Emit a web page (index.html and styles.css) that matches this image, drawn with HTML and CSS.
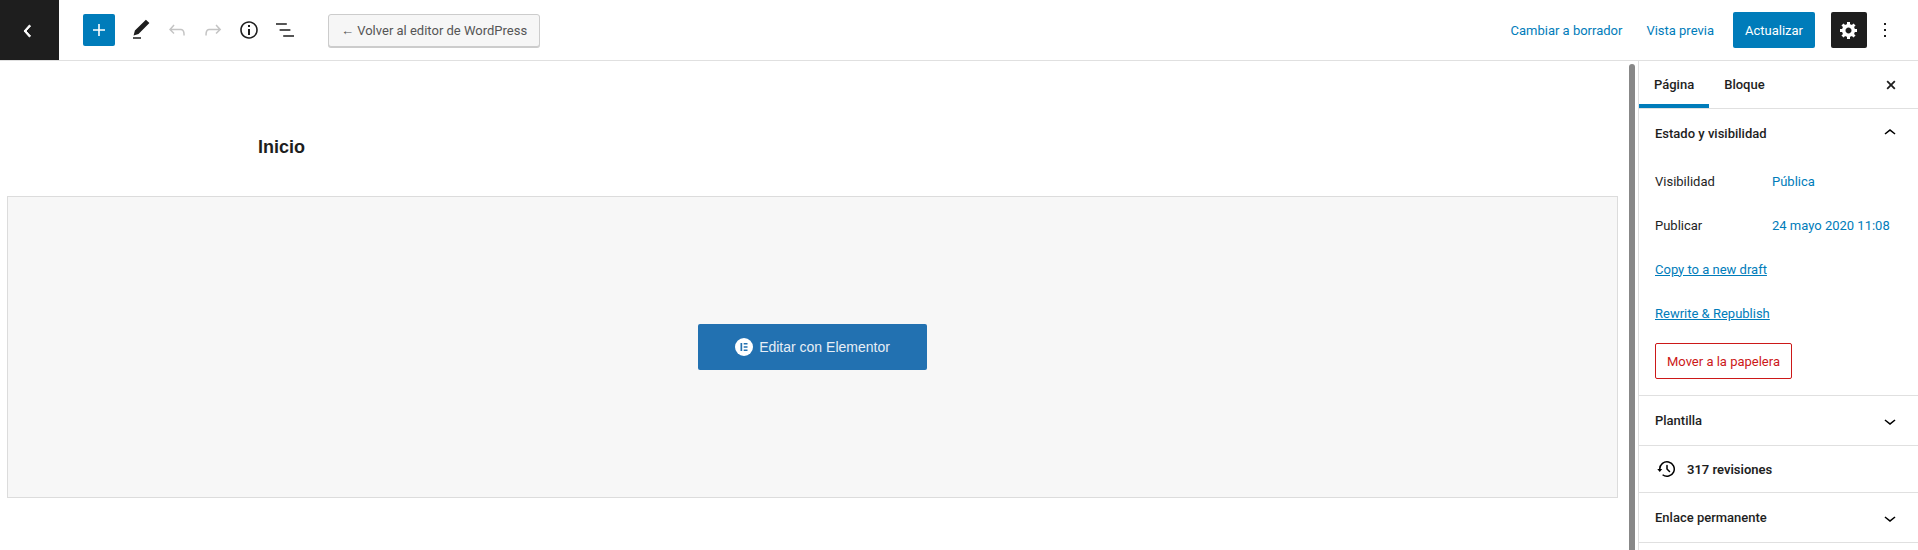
FILE: index.html
```html
<!DOCTYPE html>
<html lang="es">
<head>
    <meta charset="UTF-8">
    <title>Editar página</title>
    <link rel="stylesheet" href="styles.css">
</head>
<body>
    <header class="topbar">
        <a class="back-btn" href="#">
            <svg width="24" height="24" viewBox="0 0 24 24"><path d="M14.6 7l-1.2-1L8 12l5.4 6 1.2-1-4.6-5z" fill="#fff" stroke="#fff" stroke-width="1"/></svg>
        </a>
        <div class="tools">
            <button class="add-btn">
                <svg width="24" height="24" viewBox="0 0 24 24"><path d="M18 11.2h-5.2V6h-1.6v5.2H6v1.6h5.2V18h1.6v-5.2H18z"/></svg>
            </button>
            <button class="tool">
                <svg width="24" height="24" viewBox="0 0 24 24"><path d="M20.4 5.1L16.9 1.7 5.9 12.6l-1.3 4.8 4.9-1.3L20.4 5.1zM4 20.8h8v-1.5H4v1.5z"/></svg>
            </button>
            <button class="tool disabled">
                <svg width="24" height="24" viewBox="0 0 24 24"><path d="M18.3 11.7c-.6-.6-1.4-.9-2.3-.9H6.7l2.9-3.3-1.1-1-4.5 5L8.5 16l1-1-2.7-2.7H16c.5 0 .9.2 1.3.5 1 1 1 3.4 1 4.5v.3h1.5v-.2c0-1.5 0-4.3-1.5-5.7z"/></svg>
            </button>
            <button class="tool disabled">
                <svg width="24" height="24" viewBox="0 0 24 24"><path d="M15.6 6.5l-1.1 1 2.9 3.3H8c-.9 0-1.7.3-2.3.9-1.4 1.5-1.4 4.2-1.4 5.6v.2h1.5v-.3c0-1.1 0-3.5 1-4.5.3-.3.7-.5 1.3-.5h9.2L14.5 15l1.1 1.1 4.6-4.6-4.6-5z"/></svg>
            </button>
            <button class="tool">
                <svg width="24" height="24" viewBox="0 0 24 24"><path d="M12 3.2c-4.8 0-8.8 3.9-8.8 8.8 0 4.8 3.9 8.8 8.8 8.8 4.8 0 8.8-3.9 8.8-8.8 0-4.8-4-8.8-8.8-8.8zm0 16c-4 0-7.2-3.3-7.2-7.2C4.8 8 8 4.8 12 4.8s7.2 3.3 7.2 7.2c0 4-3.2 7.2-7.2 7.2zM11 17h2v-6h-2v6zm0-8h2V7h-2v2z"/></svg>
            </button>
            <button class="tool">
                <svg width="24" height="24" viewBox="0 0 24 24"><path d="M13.8 5.2H3v1.5h10.8V5.2zm-3.6 12v1.5H21v-1.5H10.2zm7.2-6H6.6v1.5h10.8v-1.5z"/></svg>
            </button>
            <a class="return-btn" href="#">← Volver al editor de WordPress</a>
        </div>
        <div class="settings">
            <a class="link" href="#">Cambiar a borrador</a>
            <a class="link" href="#">Vista previa</a>
            <button class="update-btn">Actualizar</button>
            <button class="gear-btn">
                <svg width="20" height="20" viewBox="0 0 20 20"><path d="M18 12h-2.18c-.17.7-.44 1.35-.81 1.93l1.54 1.54-2.1 2.1-1.54-1.54c-.58.36-1.23.63-1.91.79V19H8v-2.18c-.68-.16-1.33-.43-1.91-.79l-1.54 1.54-2.12-2.12 1.54-1.54c-.36-.58-.63-1.23-.79-1.91H1V9.03h2.17c.16-.7.44-1.35.8-1.94L2.43 5.55l2.1-2.1 1.54 1.54c.58-.37 1.24-.64 1.93-.81V2h3v2.18c.68.16 1.33.43 1.91.79l1.54-1.54 2.12 2.12-1.54 1.54c.36.59.64 1.24.8 1.94H18V12zm-8.5 1.5c1.66 0 3-1.34 3-3s-1.34-3-3-3-3 1.34-3 3 1.34 3 3 3z"/></svg>
            </button>
            <button class="more-btn">
                <svg width="24" height="24" viewBox="0 0 24 24"><path d="M13 19h-2v-2h2v2zm0-6h-2v-2h2v2zm0-6h-2V5h2v2z"/></svg>
            </button>
        </div>
    </header>

    <div class="workspace">
        <main class="content">
            <h1 class="page-title">Inicio</h1>
            <div class="placeholder">
                <a class="elementor-btn" href="#">
                    <svg width="18" height="18" viewBox="0 0 18 18"><circle cx="9" cy="9" r="9" fill="#fff"/><path d="M5.5 5h1.7v8H5.5zM8.7 5h3.8v1.5H8.7zM8.7 8.2h3.8v1.6H8.7zM8.7 11.5h3.8V13H8.7z" fill="#2271b1"/></svg>
                    Editar con Elementor
                </a>
            </div>
        </main>
        <div class="scrollbar"><div class="scroll-thumb"></div></div>

        <aside class="sidebar">
            <div class="tabs">
                <span class="tab active">Página</span>
                <span class="tab">Bloque</span>
                <button class="close-btn">
                    <svg width="18" height="18" viewBox="0 0 20 20"><path d="M14.95 6.46L11.41 10l3.54 3.54-1.41 1.41L10 11.42l-3.54 3.53-1.41-1.41L8.59 10 5.05 6.46l1.41-1.41L10 8.59l3.54-3.54z"/></svg>
                </button>
            </div>

            <section class="panel panel-open">
                <div class="panel-head">
                    <span>Estado y visibilidad</span>
                    <svg width="24" height="24" viewBox="0 0 24 24"><path d="M6.5 12.4L12 8l5.5 4.4-.9 1.2L12 10l-4.5 3.6-1-1.2z"/></svg>
                </div>
                <div class="row"><span class="row-label">Visibilidad</span><a class="link" href="#">Pública</a></div>
                <div class="row"><span class="row-label">Publicar</span><a class="link" href="#">24 mayo 2020 11:08</a></div>
                <div class="row"><a class="link underlined" href="#">Copy to a new draft</a></div>
                <div class="row"><a class="link underlined" href="#">Rewrite &amp; Republish</a></div>
                <button class="trash-btn">Mover a la papelera</button>
            </section>

            <section class="panel panel-closed">
                <span>Plantilla</span>
                <svg width="24" height="24" viewBox="0 0 24 24"><path d="M17.5 11.6L12 16l-5.5-4.4.9-1.2L12 14l4.5-3.6 1 1.2z"/></svg>
            </section>
            <section class="panel revisions">
                <svg width="24" height="24" viewBox="0 0 24 24"><path d="M5.5 12h1.75l-2.5 3-2.5-3H4a8 8 0 113.134 6.35l.907-1.194A6.5 6.5 0 105.5 12zm9.53 1.97l-2.28-2.28V8.5a.75.75 0 00-1.5 0V12a.747.747 0 00.218.529l1.282-.84-1.28.842 2.5 2.5a.75.75 0 101.06-1.061z"/></svg>
                <span>317 revisiones</span>
            </section>
            <section class="panel panel-closed">
                <span>Enlace permanente</span>
                <svg width="24" height="24" viewBox="0 0 24 24"><path d="M17.5 11.6L12 16l-5.5-4.4.9-1.2L12 14l4.5-3.6 1 1.2z"/></svg>
            </section>
        </aside>
    </div>
</body>
</html>
```

FILE: styles.css
```css
html, body {
    margin: 0;
    padding: 0;
    height: 550px;
    overflow: hidden;
    background-color: #fff;
    color: #1e1e1e;
    font-family: 'Roboto', sans-serif;
    font-size: 13px;
}
button {
    border: none;
    background: none;
    padding: 0;
    font: inherit;
    display: flex;
    align-items: center;
    justify-content: center;
}
a {
    text-decoration: none;
}
svg {
    display: block;
}
.link {
    color: #007cba;
}
.underlined {
    text-decoration: underline;
}

/* top bar */
.topbar {
    display: flex;
    align-items: center;
    height: 60px;
    border-bottom: 1px solid #e0e0e0;
}
.back-btn {
    width: 59px;
    height: 60px;
    box-sizing: border-box;
    padding: 1px 3px 0 0;
    background-color: #1e1e1e;
    display: flex;
    align-items: center;
    justify-content: center;
}
.tools {
    display: flex;
    align-items: center;
    margin-left: 24px;
}
.add-btn {
    width: 32px;
    height: 32px;
    background-color: #007cba;
    border-radius: 2px;
    fill: #fff;
    margin-right: 8px;
}
.tool {
    width: 36px;
    height: 36px;
    fill: #1e1e1e;
}
.tool.disabled {
    fill: #c4c4c4;
}
.return-btn {
    margin-left: 25px;
    height: 31px;
    line-height: 31px;
    padding: 0 12px;
    border: 1px solid #ccc;
    border-radius: 3px;
    background-color: #f6f6f6;
    color: #555;
    box-shadow: 0 1px 0 #ccc;
}
.settings {
    display: flex;
    align-items: center;
    margin-left: auto;
}
.settings .link {
    margin-right: 24px;
}
.settings .link + .update-btn {
    margin-left: -5px;
}
.update-btn {
    width: 82px;
    height: 36px;
    background-color: #007cba;
    color: #fff;
    border-radius: 2px;
    margin-right: 16px;
}
.gear-btn {
    width: 36px;
    height: 36px;
    background-color: #1e1e1e;
    border-radius: 2px;
    fill: #fff;
}
.more-btn {
    width: 24px;
    height: 36px;
    margin: 0 21px 0 6px;
    fill: #1e1e1e;
}

/* editor */
.workspace {
    display: flex;
    height: 489px;
    overflow: hidden;
}
.content {
    flex: 1;
    padding: 0 0 0 7px;
}
.page-title {
    margin: 0;
    padding: 75px 0 0 251px;
    height: 60px;
    font-family: 'Liberation Sans', sans-serif;
    font-size: 18px;
    line-height: 22px;
    font-weight: 700;
}
.placeholder {
    height: 300px;
    border: 1px solid #dcdcdc;
    background-color: #f7f7f7;
    display: flex;
    align-items: center;
    justify-content: center;
}
.elementor-btn {
    display: flex;
    align-items: center;
    gap: 6px;
    width: 229px;
    height: 46px;
    box-sizing: border-box;
    justify-content: center;
    background-color: #2271b1;
    border-radius: 2px;
    color: #e6eef6;
    font-family: 'Liberation Sans', sans-serif;
    font-size: 14px;
}
.scrollbar {
    width: 20px;
    padding: 3px 3px 0 11px;
    box-sizing: border-box;
}
.scroll-thumb {
    height: 100%;
    background-color: #888;
    border-radius: 3px 3px 0 0;
}

/* sidebar */
.sidebar {
    width: 279px;
    border-left: 1px solid #e0e0e0;
}
.tabs {
    display: flex;
    align-items: center;
    height: 47px;
    border-bottom: 1px solid #e0e0e0;
    font-weight: 500;
}
.tab {
    height: 47px;
    line-height: 47px;
    padding: 0 15px;
    box-sizing: border-box;
}
.tab.active {
    box-shadow: inset 0 -4px 0 #007cba;
}
.close-btn {
    margin-left: auto;
    width: 24px;
    height: 24px;
    margin-right: 15px;
    fill: #1e1e1e;
}
.panel {
    border-bottom: 1px solid #e0e0e0;
    box-sizing: border-box;
    padding: 0 16px 0 16px;
    font-weight: 500;
}
.panel-open {
    height: 287px;
    font-weight: 400;
}
.panel-head {
    display: flex;
    justify-content: space-between;
    align-items: center;
    height: 48px;
    margin-bottom: 2px;
    font-weight: 500;
}
.row {
    display: flex;
    height: 44px;
    align-items: center;
}
.row-label {
    width: 117px;
}
.trash-btn {
    height: 36px;
    width: 137px;
    margin-top: 8px;
    border: 1px solid #cc1818;
    border-radius: 2px;
    color: #cc1818;
}
.panel-closed {
    display: flex;
    justify-content: space-between;
    align-items: center;
    height: 50px;
}
.revisions {
    display: flex;
    align-items: center;
    gap: 8px;
    height: 47px;
    font-weight: 600;
}
```
